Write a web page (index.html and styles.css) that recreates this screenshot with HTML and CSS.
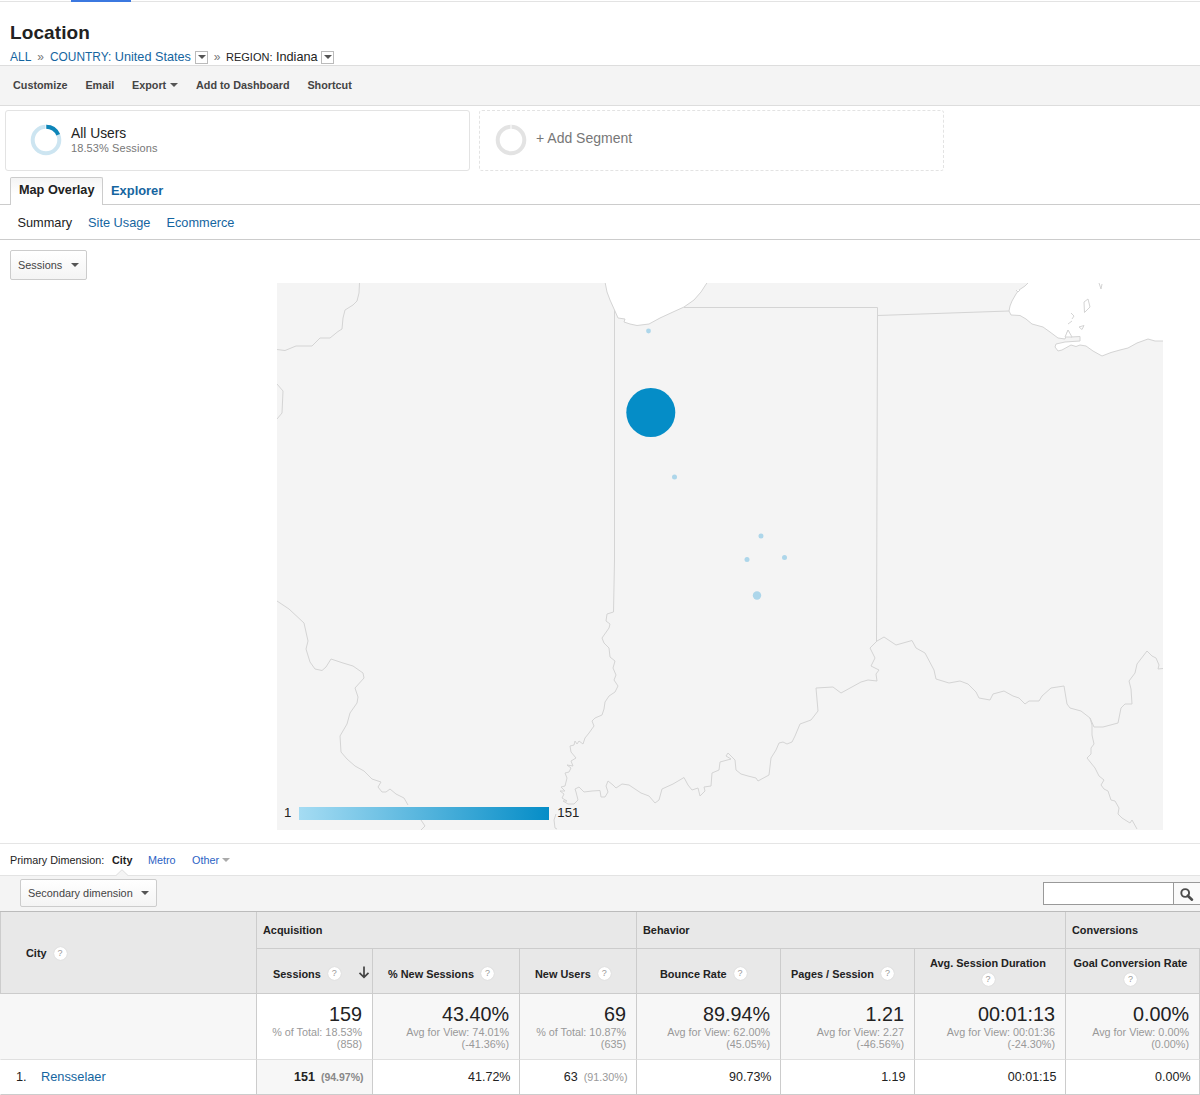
FILE: index.html
```html
<!DOCTYPE html>
<html lang="en">
<head>
<meta charset="utf-8">
<title>Location</title>
<link rel="stylesheet" href="styles.css">
</head>
<body>
<div class="topline"><div class="topline-active"></div></div>
<header class="header">
  <h1>Location</h1>
  <nav class="crumbs">
    <a class="c-all">ALL</a><span class="sep">»</span><a class="c-country"><small>COUNTRY:</small> United States</a><span class="box"><i class="caret"></i></span><span class="sep">»</span><span class="c-region"><small>REGION:</small> Indiana</span><span class="box"><i class="caret"></i></span>
  </nav>
</header>
<div class="toolbar">
  <span>Customize</span><span>Email</span><span>Export <i class="caret"></i></span><span>Add to Dashboard</span><span>Shortcut</span>
</div>
<section class="segments">
  <div class="segment">
    <svg class="ring" width="32" height="32" viewBox="0 0 32 32"><circle cx="16" cy="16" r="13.3" fill="none" stroke="#cde5f1" stroke-width="4"/><path d="M16 2.7A13.3 13.3 0 0 1 28.2 10.7" fill="none" stroke="#0d85b8" stroke-width="4"/><path d="M15.8 .5v4.5" stroke="#fff" stroke-width=".8"/></svg>
    <div><div class="seg-name">All Users</div><div class="seg-sub">18.53% Sessions</div></div>
  </div>
  <div class="segment dashed">
    <svg class="ring" width="32" height="32" viewBox="0 0 32 32"><circle cx="16" cy="16" r="13.3" fill="none" stroke="#e3e3e3" stroke-width="4"/><path d="M16 .5v4.5" stroke="#fff" stroke-width="1"/></svg>
    <div class="seg-add">+ Add Segment</div>
  </div>
</section>
<nav class="tabs"><span class="tab active">Map Overlay</span><a class="tab">Explorer</a></nav>
<nav class="subnav"><span>Summary</span><a>Site Usage</a><a>Ecommerce</a></nav>
<section class="chart">
  <div class="btn metric"><span>Sessions</span><i class="caret"></i></div>
  <div class="map">
    <svg width="886" height="547" viewBox="277 283 886 547">
      <rect x="277" y="283" width="886" height="547" fill="#f4f4f4"/>
      <g fill="#fff" stroke="#d4d4d4" stroke-width="1" stroke-linejoin="round">
        <path d="M605 282L607 292L610 300L614.500 310L618 318L625 319L624 322L630 324L637 325.500L649 324L660 318L673 312L684 307L694 300L701 292L707.500 282"/>
        <path d="M1029 282L1025 286L1019 290L1016 294L1012 301L1010 306L1009 311L1011 315L1020 315.500L1026 319L1032 324L1043 327L1050 332L1058 338L1065 339L1068 330L1071 337L1080 336.500V341L1065 342L1056 344L1055 347L1058 351L1062 350L1071 345L1076 346.500L1080 345L1086 346L1093 351L1102 356L1111 352.500L1120 350L1128 348L1137 343L1148 339L1155 341L1164 341V282"/>
        <path d="M1084 302L1088 299L1090 307L1084.500 312.500zM1099 283L1101 289L1102 284M1071 313L1074 316L1072 319M1072 321L1068 324M1079 327L1084 325.500L1082 329.500zM1016 290L1018 292L1020 290M1065 337L1068 330L1072 337z"/>
      </g>
      <g fill="none" stroke="#d4d4d4" stroke-width="1" stroke-linejoin="round">
        <path d="M684 307.500H877.500V316M877.500 315.500L1009 311M877.500 315L876.500 641M614.500 310V560L613.500 612"/>
        <path d="M359.500 283L359 293L357 301L353 305L345 310L343 318L342 329L338 331.500L330 338H320L312 346H296L285 350.500L277 349.500M277 384L283 391L282 413L277 419"/>
        <path d="M277 601L289 609L304 623L308 641L306 649L310 662L315 669L322 670.500L326 667L331 659L343 663L353 666L363 673L364 678L355 688L358 697L357 703L350 713L347 724L340 736L341 752L347 759L355 766L364 771L372 779L381 782L378 787L382 792L386 792L390 789L396 794L404 798L408 805M421 820L425 826L421 830"/>
        <path d="M613.500 612L607 614L606 621L610 624L609 628L602 638L604 643L609 648L610 657L615 661L613 668L616 675L614 680L618 686L615 692L609 696L605 702L604 709L602 715L595 718L592 721L594 726L589 733L585 738L583 744L579 741L577 744L575 741L574 745L570 746L571 752L576 758L571 761L573 766L567 765L571 768L569 772L565 773L567 778L565 786L561 787L565 791L560 791L564 794L562 798L567 801L563 801L568 804L574 804L578 800L576 792L575 789L579 787L584 792L592 791L600 790.500L601 797L605 797L608 792L606 786L608 781L613 785L616 788L622 784L629 785L641 793L649 796L655 803L659 800L662 789L673 784L684 777.500L688 785L692 790L698 788L700 796L705 791L704 787L711 786L712 773L719 770L720 762L731 759L726 756L728 753L735 760L736 770L741 774L748 776L756 778L758 781L769 775L771 758L776 750L779 743L783 742L787 744L792 742L795 736L800 724L811 720L818 711L816 688L833 687L841 693L861 682L868 680L877 681L876 674L879 670L871 666L875 658L870 648L877 641L884 637L896 645L912 640.500L916 648L925 653L934 670L936 679L949 683L960 681L968 684L976 692L979 698L990 700L993 694L1004 691L1013 696L1019 698L1025 704L1029 701L1039 701L1042 696L1051 688L1064 686L1067 704L1070 708L1081 711L1090 718L1094 727L1103 727L1118 723L1121 708L1125 704L1132 704L1131 689L1129 681L1135 673L1137 664L1147 651L1152 656L1156 658L1159 665L1158 669L1163 668.500"/>
        <path d="M1090 718L1092 725L1092 735L1094 744L1091 748L1091 754L1087 758L1095 768L1099 776L1104 780L1101 785L1104 789L1108 791L1111 800L1115 801L1119 808L1118 814L1122 818L1130 823L1132 820L1137 829M556 814L554 820L555 828L557 829"/>
      </g>
      <circle cx="650.800" cy="412.500" r="24.500" fill="#058dc7"/>
      <g fill="#add6ea"><circle cx="648.500" cy="331" r="2.400"/><circle cx="674.500" cy="477" r="2.500"/><circle cx="761" cy="536" r="2.500"/><circle cx="747" cy="559.500" r="2.500"/><circle cx="784.500" cy="557.500" r="2.500"/><circle cx="757" cy="595.500" r="4.200"/></g>
    </svg>
    <div class="legend"><span>1</span><div class="scale"></div><span>151</span></div>
  </div>
</section>
<div class="primary"><span class="p-label">Primary Dimension:</span><b>City</b><a class="p-metro">Metro</a><a class="p-other">Other</a><i class="caret light"></i>
  <svg class="notch" width="12" height="7" viewBox="0 0 12 7"><path d="M0 6.500L6 .7L12 6.500V7H0z" fill="#f4f4f4"/><path d="M0 6.500L6 .7L12 6.500" fill="none" stroke="#ddd"/></svg>
</div>
<div class="tablebar">
  <div class="btn secondary"><span>Secondary dimension</span><i class="caret"></i></div>
  <div class="search"><div class="field"></div><div class="go"><svg width="16" height="16" viewBox="0 0 16 16"><circle cx="6.200" cy="6" r="3.900" fill="none" stroke="#4c4c4c" stroke-width="1.900"/><path d="M8.800 8.700L13 12.700" stroke="#4c4c4c" stroke-width="2.600" stroke-linecap="round"/></svg></div></div>
</div>
<div class="table">
  <div class="h city"><span>City</span><i class="q">?</i></div>
  <div class="g acq">Acquisition</div><div class="g beh">Behavior</div><div class="g conv">Conversions</div>
  <div class="h"><span>Sessions</span><i class="q">?</i><svg class="arrow" width="12" height="13" viewBox="0 0 12 13"><path d="M6 .5V11M1.500 6.800L6 11.300L10.500 6.800" fill="none" stroke="#444" stroke-width="1.700"/></svg></div>
  <div class="h h2"><span>% New Sessions</span><i class="q">?</i></div>
  <div class="h h3"><span>New Users</span><i class="q">?</i></div>
  <div class="h h4"><span>Bounce Rate</span><i class="q">?</i></div>
  <div class="h h5"><span>Pages / Session</span><i class="q">?</i></div>
  <div class="h two"><span>Avg. Session Duration</span><i class="q">?</i></div>
  <div class="h two last"><span>Goal Conversion Rate</span><i class="q">?</i></div>

  <div class="s first"></div>
  <div class="s sorted"><strong>159</strong><p>% of Total: 18.53%<br>(858)</p></div>
  <div class="s"><strong>43.40%</strong><p>Avg for View: 74.01%<br>(-41.36%)</p></div>
  <div class="s"><strong>69</strong><p>% of Total: 10.87%<br>(635)</p></div>
  <div class="s"><strong>89.94%</strong><p>Avg for View: 62.00%<br>(45.05%)</p></div>
  <div class="s"><strong>1.21</strong><p>Avg for View: 2.27<br>(-46.56%)</p></div>
  <div class="s"><strong>00:01:13</strong><p>Avg for View: 00:01:36<br>(-24.30%)</p></div>
  <div class="s last"><strong>0.00%</strong><p>Avg for View: 0.00%<br>(0.00%)</p></div>

  <div class="r name"><span>1.</span><a>Rensselaer</a></div>
  <div class="r sorted"><b>151</b><em>(94.97%)</em></div>
  <div class="r">41.72%</div>
  <div class="r">63<em>(91.30%)</em></div>
  <div class="r">90.73%</div>
  <div class="r">1.19</div>
  <div class="r">00:01:15</div>
  <div class="r last">0.00%</div>
</div>
</body>
</html>
```
FILE: styles.css
```css
* { box-sizing: border-box; }
body { margin: 0; width: 1200px; height: 1095px; overflow: hidden; background: #fff; color: #222; font-family: "Liberation Sans", Arial, sans-serif; font-size: 13px; }
a { color: #1565a0; }
i, em { font-style: normal; }
svg { display: block; }
.caret { display: inline-block; flex: none; border: 4px solid transparent; border-top-color: #555; border-bottom: 0; }
.caret.light { border-top-color: #aaa; }

.topline { height: 2px; border-bottom: 1px solid #e3e3e3; padding-left: 71px; }
.topline-active { width: 60px; height: 2px; background: #3b78e0; }

.header { height: 64px; padding: 20px 10px 0; border-bottom: 1px solid #ddd; }
h1 { margin: 0; font-size: 19px; line-height: 22px; letter-spacing: .1px; }
.crumbs { display: flex; align-items: center; height: 16px; margin-top: 5px; font-size: 12.700px; white-space: nowrap; }
.crumbs small { font-size: 11px; }
.crumbs .c-country small { font-size: 11.900px; }
.crumbs .c-all { width: 21px; font-size: 12px; }
.crumbs .c-country { width: 141px; }
.crumbs .c-region { width: 91px; }
.sep { width: 19px; text-align: center; color: #777; font-size: 12px; }
.box { width: 13px; height: 13px; margin-left: 4px; border: 1px solid #bbb; display: flex; align-items: center; justify-content: center; }
.box + .sep { width: 18px; }

.toolbar { display: flex; height: 40px; padding: 0 13px; gap: 17.800px; background: #f4f4f4; border-bottom: 1px solid #ddd; font-size: 10.800px; font-weight: bold; line-height: 38px; color: #444; white-space: nowrap; }
.toolbar .caret { margin-left: 1px; vertical-align: 2px; }

.segments { display: flex; gap: 9px; padding: 4px 5px 0; height: 71px; }
.segment { width: 465px; height: 61px; border: 1px solid #e3e3e3; border-radius: 3px; display: flex; padding: 13px 0 0 24px; }
.dashed { border-style: dashed; padding-left: 15px; }
.ring { margin-right: 9px; }
.seg-name { font-size: 13.800px; line-height: 19px; }
.seg-sub { font-size: 11px; line-height: 11px; color: #777; letter-spacing: .1px; }
.seg-add { font-size: 14px; line-height: 28px; color: #777; }

.tabs { display: flex; height: 28px; padding-left: 10px; border-bottom: 1px solid #ccc; font-size: 12.900px; font-weight: bold; white-space: nowrap; }
.tab { height: 28px; padding: 0 8px; line-height: 27px; }
.tab.active { width: 93px; line-height: 25px; background: linear-gradient(#f4f4f4, #fff 60%); border: 1px solid #ccc; border-bottom: 0; border-radius: 2px 2px 0 0; padding-right: 0; font-size: 12.700px; }
.subnav { display: flex; gap: 16px; height: 36px; padding-left: 17.500px; line-height: 36px; border-bottom: 1px solid #ccc; height: 35px; margin-bottom: 1px; font-size: 12.750px; }

.chart { display: flex; height: 602px; padding: 9px 0 0 10px; }
.btn { display: flex; align-items: center; justify-content: space-between; border: 1px solid #ccc; border-radius: 2px; background: linear-gradient(#fff, #f4f4f4); padding: 0 7px; font-size: 10.900px; color: #444; }
.metric { width: 77px; height: 30px; }
.map { position: relative; width: 886px; height: 547px; margin: 33px 0 0 190px; }
.legend { position: absolute; left: 7px; bottom: 9px; display: flex; align-items: center; gap: 8px; line-height: 16px; font-size: 13.200px; }
.scale { width: 250px; height: 13px; background: linear-gradient(90deg, #a5dcf3, #058dc7); }

.primary { position: relative; display: flex; align-items: center; height: 33px; padding-left: 10px; border-top: 1px solid #e5e5e5; border-bottom: 1px solid #e3e3e3; font-size: 10.800px; }
.primary a { color: #2a62c4; }
.p-label { width: 102px; }
.primary b { width: 36px; }
.p-metro { width: 44px; }
.p-other { width: 30px; }
.notch { position: absolute; left: 116px; bottom: -1px; }

.tablebar { display: flex; justify-content: space-between; height: 35px; padding: 3px 0 0 20px; background: #f4f4f4; }
.secondary { width: 137px; height: 28px; }
.search { display: flex; width: 157px; height: 23px; margin-top: 3px; border: 1px solid #999; border-right: 0; background: #fff; }
.field { width: 129px; }
.go { flex: 1; border-left: 1px solid #999; padding: 4px 0 0 5px; background: #fafafa; }

.table { display: grid; grid-template-columns: 256px 116px 147px 117px 144px 134px 151px 135px; grid-template-rows: 37px 45px 66px 35px; border-top: 1px solid #bbb; }
.table > div { border-left: 1px solid #ccc; }
.table .last { border-right: 1px solid #ccc; }
.h, .g { background: #e8e8e8; font-size: 10.900px; font-weight: bold; border-bottom: 1px solid #ccc; }
.g { padding-left: 6px; line-height: 37px; }
.acq { grid-column: span 3; }
.beh { grid-column: span 3; }
.h { position: relative; display: flex; align-items: center; justify-content: flex-start; gap: 7px; padding: 5px 0 0 16px; white-space: nowrap; }
.h2 { padding-left: 15px; }
.h3 { padding-left: 15px; }
.h4 { padding-left: 23px; }
.h5 { padding-left: 10px; }
.city { grid-row: span 2; padding: 1px 0 0 25px; }
.h.two { flex-direction: column; gap: 3px; padding: 8px 4px 0 0; line-height: 13px; }
.q { display: block; flex: none; width: 13px; height: 13px; border-radius: 50%; background: #fff; color: #999; font-size: 9px; font-weight: normal; line-height: 13px; text-align: center; box-shadow: 0 0 1px #bbb; }
.arrow { position: absolute; right: 2px; top: 17px; }
.s { background: #f7f7f7; border-bottom: 1px solid #e0e0e0; text-align: right; padding: 8px 10px 0 0; white-space: nowrap; }
.s strong { display: block; font-size: 19.800px; line-height: 24px; font-weight: normal; }
.s p { margin: 0; font-size: 10.800px; line-height: 12px; color: #999; }
.table > .sorted { background: #fff; }
.table > .first, .table > .name { border-left-color: transparent; }
.r { border-bottom: 1px solid #ccc; text-align: right; font-size: 12.500px; line-height: 35px; padding-right: 8.500px; }
.table > .r.sorted { background: #f7f7f7; }
.r em { margin-left: 6px; font-size: 10.800px; color: #999; }
.r.sorted em { font-weight: bold; font-size: 10.500px; color: #888; }
.name { text-align: left; display: flex; padding-left: 15px; font-size: 12.800px; line-height: 33px; }
.name span { width: 25px; }
```
